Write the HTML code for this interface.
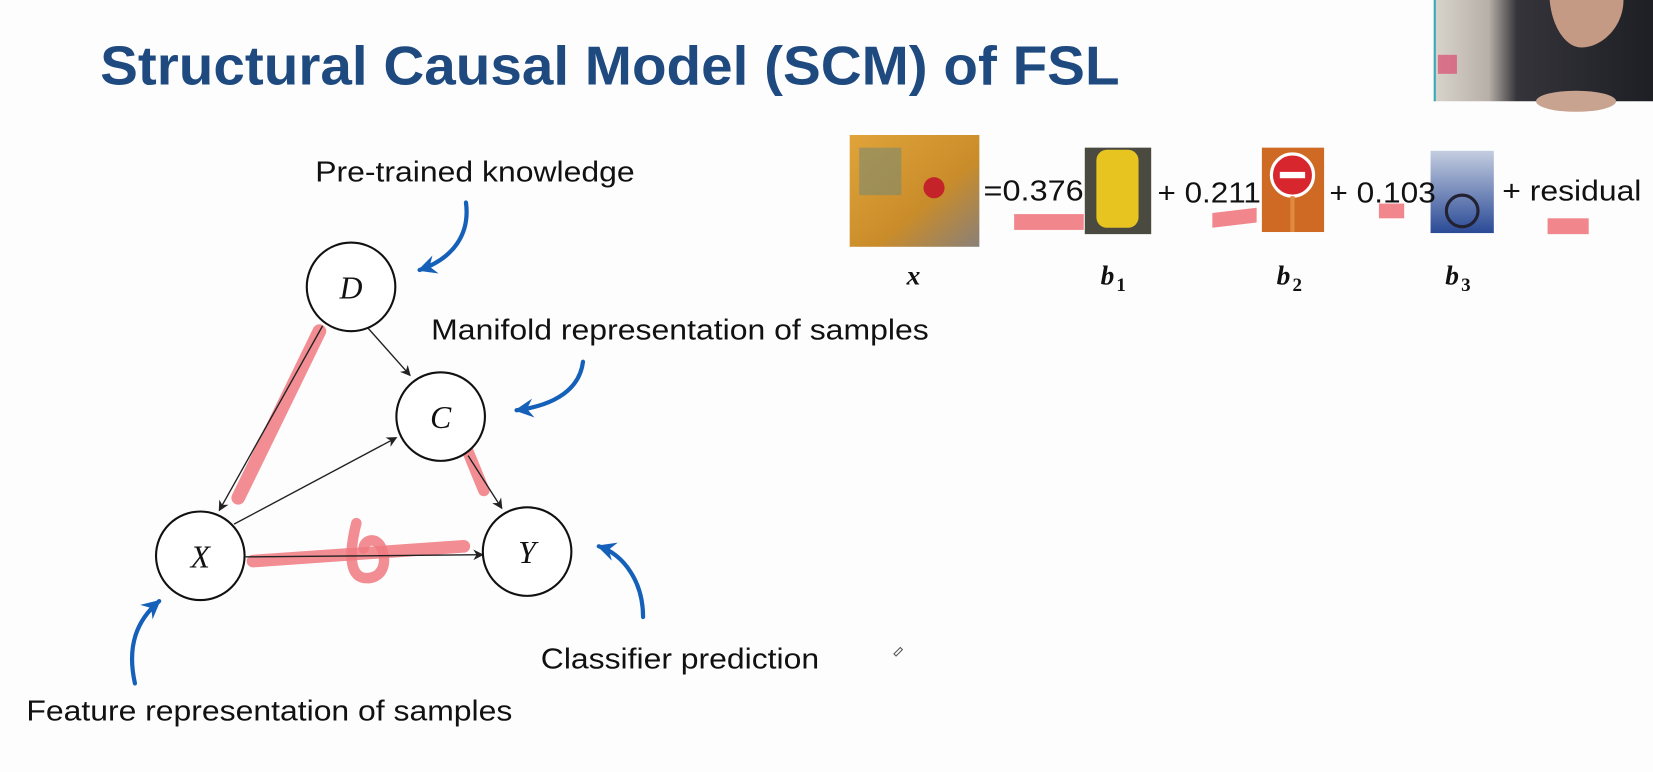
<!DOCTYPE html>
<html><head><meta charset="utf-8"><style>
html,body{margin:0;padding:0;background:#fdfdfd;overflow:hidden}
svg{display:block}
</style></head><body>
<svg width="1653" height="772" viewBox="0 0 1568 732" preserveAspectRatio="none" xmlns="http://www.w3.org/2000/svg">
<defs>
<marker id="ah" markerWidth="10" markerHeight="10" refX="9" refY="5" orient="auto" markerUnits="userSpaceOnUse"><path d="M0,0 L10,5 L0,10 L3,5 Z" fill="#222"/></marker>
<marker id="bh" markerWidth="22" markerHeight="22" refX="16" refY="11" orient="auto" markerUnits="userSpaceOnUse"><path d="M0,2 L18,11 L0,20 L6,11 Z" fill="#1560b8"/></marker>
<linearGradient id="cam" x1="0" y1="0" x2="1" y2="0"><stop offset="0" stop-color="#d8d4cc"/><stop offset="0.25" stop-color="#b8b0a8"/><stop offset="0.38" stop-color="#34343a"/><stop offset="1" stop-color="#1e1f24"/></linearGradient>
<linearGradient id="bus" x1="0" y1="0" x2="1" y2="1"><stop offset="0" stop-color="#e0a43a"/><stop offset="0.6" stop-color="#c98c2a"/><stop offset="1" stop-color="#8a8078"/></linearGradient>
<linearGradient id="uni" x1="0" y1="0" x2="0" y2="1"><stop offset="0" stop-color="#c4cde0"/><stop offset="1" stop-color="#2a4a96"/></linearGradient>
</defs>
<rect width="1568" height="732" fill="#fdfdfd"/>
<!-- webcam -->
<rect x="1360" y="0" width="208" height="96" fill="url(#cam)"/>
<path d="M1470,0 L1540,0 C1540,25 1520,45 1500,45 C1485,45 1472,25 1470,0 Z" fill="#c49a84"/>
<rect x="1364" y="52" width="18" height="18" fill="#d85a7a" opacity="0.8"/>
<ellipse cx="1495" cy="96" rx="38" ry="10" fill="#c8a390"/>
<rect x="1360" y="0" width="2" height="96" fill="#3aa9b8"/>
<!-- title -->
<text x="95" y="80" font-family="Liberation Sans, sans-serif" font-weight="bold" font-size="52" fill="#1f4a80" textLength="967" lengthAdjust="spacingAndGlyphs">Structural Causal Model (SCM) of FSL</text>
<!-- labels -->
<g font-family="Liberation Sans, sans-serif" font-size="27" fill="#111">
<text x="299" y="172" textLength="303" lengthAdjust="spacingAndGlyphs">Pre-trained knowledge</text>
<text x="409" y="322" textLength="472" lengthAdjust="spacingAndGlyphs">Manifold representation of samples</text>
<text x="513" y="634" textLength="264" lengthAdjust="spacingAndGlyphs">Classifier prediction</text>
<text x="25" y="683" textLength="461" lengthAdjust="spacingAndGlyphs">Feature representation of samples</text>
</g>
<!-- pink strokes -->
<g stroke="#f07a80" stroke-opacity="0.85" stroke-linecap="round" fill="none">
<path d="M303,314 L226,472" stroke-width="13"/>
<path d="M443,426 L459,465" stroke-width="11"/>
<path d="M240,532 L440,518" stroke-width="12"/>
<path d="M338,496 C332,520 330,545 345,548 C362,550 368,535 362,520 C357,508 345,512 345,520" stroke-width="10"/>
</g>
<!-- edges -->
<g stroke="#222" stroke-width="1.3" fill="none">
<line x1="349" y1="311" x2="389" y2="356" marker-end="url(#ah)"/>
<line x1="306" y1="309" x2="208" y2="484" marker-end="url(#ah)"/>
<line x1="222" y1="497" x2="376" y2="415" marker-end="url(#ah)"/>
<line x1="444" y1="432" x2="476" y2="482" marker-end="url(#ah)"/>
<line x1="233" y1="528" x2="458" y2="526" marker-end="url(#ah)"/>
</g>
<!-- nodes -->
<g fill="#fff" stroke="#111" stroke-width="2">
<ellipse cx="333" cy="272" rx="42" ry="42"/>
<ellipse cx="418" cy="395" rx="42" ry="42"/>
<ellipse cx="190" cy="527" rx="42" ry="42"/>
<ellipse cx="500" cy="523" rx="42" ry="42"/>
</g>
<g font-family="Liberation Serif, serif" font-style="italic" font-size="30" fill="#111" text-anchor="middle">
<text x="333" y="283">D</text><text x="418" y="406">C</text><text x="190" y="538">X</text><text x="500" y="534">Y</text>
</g>
<!-- blue arrows -->
<g stroke="#1560b8" stroke-width="4" fill="none" stroke-linecap="round">
<path d="M442,192 C446,222 430,245 398,256" marker-end="url(#bh)"/>
<path d="M553,343 C550,368 528,384 490,389" marker-end="url(#bh)"/>
<path d="M610,585 C610,552 592,526 568,518" marker-end="url(#bh)"/>
<path d="M128,648 C120,612 130,588 151,570" marker-end="url(#bh)"/>
</g>
<path d="M848,620 l6,-6 l2,2 l-6,6 z" stroke="#555" fill="none"/>
<!-- equation images -->
<rect x="806" y="128" width="123" height="106" fill="url(#bus)"/>
<rect x="815" y="140" width="40" height="45" fill="#7b8a70" opacity="0.6"/>
<circle cx="886" cy="178" r="10" fill="#c5232a"/>
<rect x="1029" y="140" width="63" height="82" fill="#4a4a40"/>
<rect x="1040" y="142" width="40" height="74" rx="10" fill="#e8c420"/>
<rect x="1197" y="140" width="59" height="80" fill="#cf6a24"/>
<circle cx="1226" cy="166" r="20" fill="#d8262e" stroke="#fff" stroke-width="3"/>
<rect x="1214" y="163" width="24" height="6" fill="#fff"/>
<rect x="1224" y="186" width="4" height="34" fill="#e08a40"/>
<rect x="1357" y="143" width="60" height="78" fill="url(#uni)"/>
<circle cx="1387" cy="200" r="15" fill="none" stroke="#223" stroke-width="3"/>
<g font-family="Liberation Sans, sans-serif" font-size="27" fill="#111">
<text x="933" y="190" textLength="95" lengthAdjust="spacingAndGlyphs">=0.376</text>
<text x="1098" y="192" textLength="98" lengthAdjust="spacingAndGlyphs">+ 0.211</text>
<text x="1261" y="192" textLength="101" lengthAdjust="spacingAndGlyphs">+ 0.103</text>
<text x="1425" y="190" textLength="132" lengthAdjust="spacingAndGlyphs">+ residual</text>
</g>
<g fill="#f07a80" fill-opacity="0.9">
<rect x="962" y="203" width="66" height="15"/>
<path d="M1150,202 L1192,197 L1192,211 L1150,216 Z"/>
<rect x="1308" y="193" width="24" height="14"/>
<rect x="1468" y="207" width="39" height="15"/>
</g>
<g font-family="Liberation Serif, serif" font-weight="bold" font-style="italic" font-size="26" fill="#111">
<text x="860" y="270">x</text>
<text x="1044" y="270">b</text><text x="1059" y="276" font-size="18" font-style="normal">1</text>
<text x="1211" y="270">b</text><text x="1226" y="276" font-size="18" font-style="normal">2</text>
<text x="1371" y="270">b</text><text x="1386" y="276" font-size="18" font-style="normal">3</text>
</g>
</svg>
</body></html>
